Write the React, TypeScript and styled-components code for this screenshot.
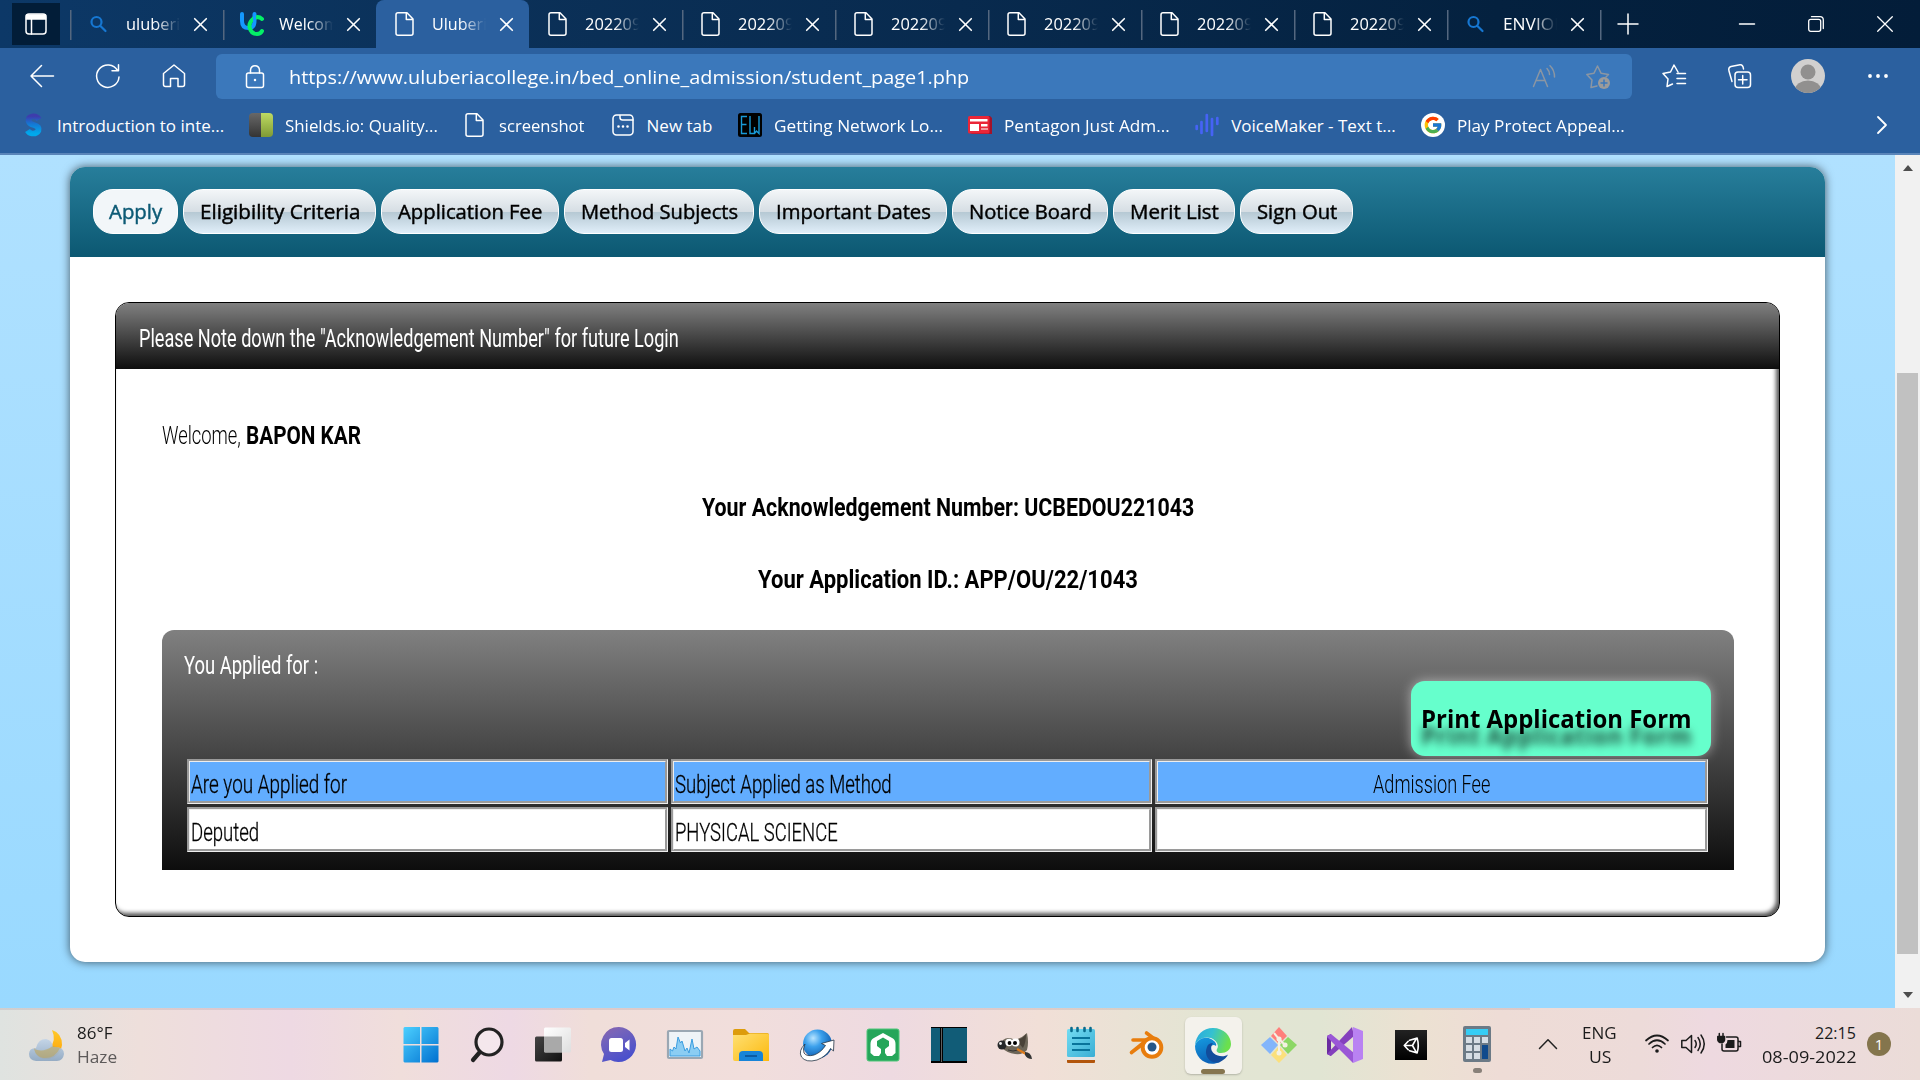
import React, { useLayoutEffect, useRef, useState } from 'react';
import styled, { createGlobalStyle } from 'styled-components';
import { FcGoogle } from 'react-icons/fc';

const UI = '"Open Sans", "Noto Sans", sans-serif';
const NARROW = 'Roboto, "Liberation Sans", sans-serif';

const GlobalStyle = createGlobalStyle`
  * { box-sizing: border-box; }
  html, body { margin: 0; padding: 0; }
  body { width: 1920px; height: 1080px; overflow: hidden; font-family: ${UI}; }
  svg { display: block; }
`;

/* ---------- text condensed or widened to a set measure ---------- */

const FitBox = styled.span<{ $w: number }>`
  display: inline-block;
  flex: none;
  width: ${p => p.$w}px;
  text-align: left;
  white-space: nowrap;
`;
const FitInner = styled.span`
  display: inline-block;
  transform-origin: 0 50%;
  white-space: nowrap;
`;

function Fit({ w, children }: { w: number; children: React.ReactNode }) {
  const ref = useRef<HTMLSpanElement>(null);
  const [scale, setScale] = useState(1);
  useLayoutEffect(() => {
    if (ref.current) setScale(w / ref.current.offsetWidth);
  }, [w]);
  return (
    <FitBox $w={w}>
      <FitInner ref={ref} style={{ transform: `scaleX(${scale})` }}>{children}</FitInner>
    </FitBox>
  );
}

/* ---------- icons ---------- */

const Line = styled.svg<{ $w?: number; $h?: number; $c?: string; $sw?: number }>`
  flex: none;
  width: ${p => p.$w ?? 24}px;
  height: ${p => p.$h ?? p.$w ?? 24}px;
  fill: none;
  stroke: ${p => p.$c ?? '#fff'};
  stroke-width: ${p => p.$sw ?? 1.5};
  stroke-linecap: round;
  stroke-linejoin: round;
  overflow: visible;
`;
const Art = styled.svg<{ $w?: number; $h?: number }>`
  flex: none;
  width: ${p => p.$w ?? 36}px;
  height: ${p => p.$h ?? p.$w ?? 36}px;
  overflow: visible;
`;

const DocIcon = () => (
  <Line viewBox="0 0 24 24"><path d="M5 .8H14L20 7V21.200Q20 23.200 18 23.200H5Q3 23.200 3 21.200V2.800Q3 .8 5 .8ZM13.300 1.200V7.500H19.700" /></Line>
);
const SearchIcon = () => (
  <Line viewBox="0 0 24 24" $c="#1677d2" $sw={2.2}><circle cx="9.500" cy="10" r="5" /><path d="M13.200 13.700L18.500 19" /></Line>
);
const UcIcon = () => (
  <Line viewBox="0 0 24 24" $sw={4}>
    <path d="M2 2V9Q2 16 8.500 16Q14.500 16 14.500 9V2" stroke="#1498ff" />
    <path d="M22 7Q18 3.500 13.500 6.500Q9 10 9.500 15Q11 22 17 22Q20.500 22 22 19" stroke="#04ef67" />
    <path d="M14.500 3V9" stroke="#1498ff" strokeWidth="3" />
  </Line>
);
const CloseIcon = () => (
  <Line viewBox="0 0 13 13" $w={13} $sw={1.6}><path d="M.7 .7L12.300 12.300M12.300 .7L.7 12.300" /></Line>
);
const NewTabIcon = () => (
  <Line viewBox="0 0 24 24">
    <rect x="2" y="2" width="20" height="20" rx="3.500" /><path d="M9 2.500V4.500Q9 7 11.500 7H22" />
    <path d="M7.500 13.500h.01M12 13.500h.01M16.500 13.500h.01" strokeWidth="2.600" />
  </Line>
);
const SIcon = () => (
  <Art $w={24} viewBox="0 0 24 24">
    <defs><linearGradient id="sg" x2="0" y2="1"><stop stopColor="#3d3dac" /><stop offset=".45" stopColor="#1478d4" /><stop offset="1" stopColor="#00a9ec" /></linearGradient></defs>
    <path d="M18 6.500Q16 3 12 3.300Q7 4 7.500 8Q8.500 11 13 12Q18.500 13.500 17.500 17.500Q15.500 21 11 20.500Q8 20 6.500 17.500" fill="none" stroke="url(#sg)" strokeWidth="5.600" />
  </Art>
);
const ShieldIcon = () => (
  <Art $w={24} viewBox="0 0 24 24">
    <defs>
      <linearGradient id="sh1" x2="0" y2="1"><stop stopColor="#686868" /><stop offset="1" stopColor="#343434" /></linearGradient>
      <linearGradient id="sh2" x2="0" y2="1"><stop stopColor="#bedb62" /><stop offset="1" stopColor="#7f9a35" /></linearGradient>
    </defs>
    <path d="M4 0H12V24H4Q0 24 0 20V4Q0 0 4 0Z" fill="url(#sh1)" /><path d="M12 0H20Q24 0 24 4V20Q24 24 20 24H12Z" fill="url(#sh2)" />
  </Art>
);
const EwIcon = () => (
  <Art $w={24} viewBox="0 0 24 24">
    <rect width="24" height="24" rx="2.500" fill="#000" />
    <path d="M9 3.500H3.500V20.500H9M3.500 11.500H8.500M12 3V20.500H16.500V14M16.500 20.500L18.500 18L21 20.500V3" fill="none" stroke="#189ad8" strokeWidth="1.400" />
  </Art>
);
const PentagonIcon = () => (
  <Art $w={24} viewBox="0 0 24 24">
    <path d="M2 3H22L24 5V21H4L1 19Z" fill="#a3122a" /><rect x="0" y="3" width="21.500" height="17.500" rx="1.500" fill="#ea2638" />
    <path d="M2 6H19.500V8.500H2ZM2 11H11V18H2ZM13 11H19.500V13.500H13ZM13 15H19.500V17H13Z" fill="#fff" />
    <path d="M13 15H19.500V17H13Z" fill="#f39aa2" />
  </Art>
);
const VoiceIcon = () => (
  <Line viewBox="0 0 24 24" $c="#4663f5" $sw={2.7}><path d="M1.700 13V16M6.500 9V20M11.800 2V18M17 6V22M22.300 5V11" /></Line>
);
const GoogleDisc = styled.span`
  width: 24px;
  height: 24px;
  border-radius: 50%;
  background: #fff;
  display: flex;
  align-items: center;
  justify-content: center;
`;

/* ---------- browser chrome ---------- */

const Screen = styled.div`
  width: 1920px;
  height: 1080px;
  display: flex;
  flex-direction: column;
  overflow: hidden;
`;
const TabStrip = styled.div`
  height: 48px;
  display: flex;
  background: linear-gradient(90deg, #0c3867 0%, #0b3159 24%, #082a4e 50%, #04213f 78%, #031d39 100%);
`;
const TabActions = styled.div`
  width: 48px;
  height: 42px;
  margin: 3px 10px 0 12px;
  background: #021d38;
  display: flex;
  align-items: center;
  justify-content: center;
`;
const Tab = styled.div<{ $active?: boolean; $noLine?: boolean }>`
  width: 153px;
  height: 48px;
  flex: none;
  display: flex;
  align-items: center;
  padding: 0 0 0 17px;
  border-radius: 8px 8px 0 0;
  background: ${p => (p.$active ? '#2b609f' : 'linear-gradient(#54677f, #54677f) 0 10px / 1.5px 30px no-repeat')};
  ${p => p.$noLine && 'background: none;'}
  color: #fff;
  font-size: 17px;
`;
const TabTitle = styled.div`
  width: 54px;
  margin-left: 15px;
  margin-right: 14px;
  overflow: hidden;
  white-space: nowrap;
  line-height: 30px;
  mask-image: linear-gradient(90deg, #000 55%, transparent 100%);
`;
const StripEnd = styled.div`
  flex: 1;
  display: flex;
  align-items: center;
  padding: 0 27px 0 17px;
  background: linear-gradient(#54677f, #54677f) 0 10px / 1.5px 30px no-repeat;
`;
const WindowButtons = styled.div`
  margin-left: auto;
  display: flex;
  align-items: center;
  gap: 53px;
`;
const Toolbar = styled.div`
  height: 57px;
  display: flex;
  align-items: center;
  padding: 0 30px 2px;
  background: #2b609f;
`;
const NavButtons = styled.div`
  width: 186px;
  display: flex;
  gap: 42px;
`;
const AddressBar = styled.div`
  width: 1416px;
  height: 45px;
  margin-top: 2px;
  display: flex;
  align-items: center;
  border-radius: 6px;
  background: #3b78bb;
  color: #fff;
  font-size: 19px;
  padding: 0 22px 0 27px;
`;
const Url = styled.div`
  margin-left: 22px;
  flex: 1;
  line-height: 30px;
`;
const AddressIcons = styled.div`
  display: flex;
  gap: 30px;
`;
const ToolIcons = styled.div`
  flex: 1;
  display: flex;
  align-items: center;
  justify-content: space-between;
  padding-left: 30px;
`;
const Bookmarks = styled.div`
  height: 50px;
  display: flex;
  align-items: center;
  gap: 25.200px;
  padding: 0 30px 8px 21px;
  background: #2b609f;
  border-bottom: 2px solid #5a85b9;
  color: #fff;
  font-size: 17px;
`;
const Bookmark = styled.div`
  display: flex;
  align-items: center;
  gap: 12px;
`;
const Pusher = styled.div`
  margin-left: auto;
`;

/* ---------- page ---------- */

const Viewport = styled.div`
  height: 853px;
  display: flex;
  background: linear-gradient(#b0e1ff, #99d9ff);
`;
const PageArea = styled.div`
  flex: 1;
  padding: 12px 70px 46px;
  display: flex;
`;
const Scrollbar = styled.div`
  width: 25px;
  background: #f1f1f1;
  display: flex;
  flex-direction: column;
  align-items: center;
  padding: 10px 0 10px;
`;
const Arrow = styled.div<{ $down?: boolean }>`
  border: 5.5px solid transparent;
  border-${p => (p.$down ? 'top' : 'bottom')}: 6px solid #4d4d4d;
  border-${p => (p.$down ? 'bottom' : 'top')}: 0;
`;
const Thumb = styled.div`
  width: 21px;
  height: 581px;
  margin: 202px 0 auto;
  background: #c1c1c1;
`;
const Card = styled.div`
  width: 1755px;
  height: 795px;
  border-radius: 15px;
  background: #fff;
  box-shadow: 0 0 10px rgba(0, 0, 0, .62);
`;
const Menu = styled.nav`
  height: 90px;
  display: flex;
  gap: 5px;
  padding: 22px 23px;
  border-radius: 15px 15px 0 0;
  background: linear-gradient(#277e9b, #0c5872);
`;
const Pill = styled.div<{ $w: number; $on?: boolean }>`
  width: ${p => p.$w}px;
  height: 45px;
  display: flex;
  align-items: center;
  justify-content: center;
  border: 1px solid #fff;
  border-radius: 20px;
  background: ${p => (p.$on ? '#f2f6f9' : 'linear-gradient(#f3f6f8 0%, #d6dee4 50%, #b5c8d3 51%, #e0eef9 100%)')};
  color: ${p => (p.$on ? '#0d5a75' : '#000')};
  font-size: 20px;
  line-height: 30px;
  -webkit-text-stroke: .45px currentColor;
`;
const Panel = styled.section`
  width: 1665px;
  height: 615px;
  margin: 45px 0 0 45px;
  border: 1px solid #000;
  border-radius: 14px;
  overflow: hidden;
  box-shadow: inset -3px -3px 4px #555;
  font-family: ${NARROW};
  font-size: 26.500px;
`;
const PanelHead = styled.div`
  height: 66px;
  padding: 2px 23px 0;
  display: flex;
  align-items: center;
  background: linear-gradient(#808080, #0d0d0d);
  color: #fff;
`;
const PanelBody = styled.div`
  padding: 50px 45px 0 46px;
`;
const Welcome = styled.div`
  height: 31px;
  line-height: 31px;
  display: flex;
  gap: 5px;
  font-weight: 300;
  b { font-weight: 700; }
`;
const Notice = styled.div`
  height: 31px;
  line-height: 31px;
  margin-top: 41px;
  text-align: center;
  font-weight: 700;
`;
const Applied = styled.div`
  width: 1572px;
  height: 240px;
  margin-top: 36px;
  border-radius: 12px 12px 0 0;
  background: linear-gradient(#808080, #0d0d0d);
  padding: 18px 23px 18px 22px;
  display: flex;
  flex-direction: column;
`;
const AppliedTitle = styled.div`
  height: 33px;
  line-height: 34px;
  color: #fff;
`;
const PrintButton = styled.div`
  align-self: flex-end;
  width: 300px;
  height: 75px;
  flex: none;
  padding-left: 10px;
  border-radius: 14px;
  background: #66ffcc;
  box-shadow: 0 0 12px rgba(255, 255, 255, .5);
  color: #000;
  font-family: ${UI};
  font-size: 25px;
  font-weight: 700;
  line-height: 75px;
  text-shadow: 0 17px 9px rgba(0, 0, 0, .7);
`;
const Grid = styled.div`
  display: grid;
  grid-template-columns: 481px 481px 553px;
  grid-auto-rows: 45px;
  gap: 3px;
  margin: 3px 0 0 3px;
`;
const Cell = styled.div<{ $head?: boolean; $center?: boolean }>`
  border: 3px groove #eee;
  padding: 6px 2px 0 1px;
  line-height: 32px;
  text-align: ${p => (p.$center ? 'center' : 'left')};
  background: ${p => (p.$head ? '#62adff' : '#fff')};
  font-weight: 300;
  -webkit-text-stroke: ${p => (p.$center ? 0 : .3)}px #000;
  color: #000;
`;

/* ---------- taskbar ---------- */

const Taskbar = styled.div`
  height: 72px;
  display: flex;
  align-items: center;
  color: #1b1b1b;
  font-size: 16px;
  background:
    linear-gradient(rgba(120, 90, 110, .15), rgba(120, 90, 110, .15)) 0 0 / 1530px 2px no-repeat,
    linear-gradient(90deg, #dfe3e0 0, #eedfdb 140px, #eed9e3 290px, #f0dedb 400px, #eed9e4 510px, #f0ded9 590px, #f1dedc 750px, #eedae1 890px, #f1dfd7 1040px, #e3e5d3 1210px, #e1e5d3 1320px, #ece1d2 1420px, #eedcd6 1500px, #eddbd9 1640px, #eed9e0 1710px, #ebdcd8 1920px);
`;
const Weather = styled.div`
  width: 388px;
  padding: 0 0 0 29px;
  display: flex;
  align-items: center;
  gap: 12px;
`;
const Lines = styled.div<{ $align?: string }>`
  display: flex;
  flex-direction: column;
  align-items: ${p => p.$align ?? 'flex-start'};
  padding-top: 2px;
  line-height: 24px;
`;
const Muted = styled.span`
  color: #5d5a5a;
`;
const Apps = styled.div`
  display: flex;
  height: 72px;
`;
const AppSlot = styled.div`
  width: 66px;
  height: 72px;
  display: flex;
  align-items: center;
  justify-content: center;
  padding-top: 2px;
`;
const ActiveApp = styled.div`
  width: 57px;
  height: 57px;
  border-radius: 6px;
  display: flex;
  flex-direction: column;
  align-items: center;
  padding-top: 11px;
  gap: 5px;
  background: #f4f2ec;
  box-shadow: 0 1px 2px rgba(0, 0, 0, .22);
`;
const Marker = styled.i<{ $w: number; $c: string }>`
  width: ${p => p.$w}px;
  height: 5px;
  border-radius: 3px;
  background: ${p => p.$c};
`;
const Running = styled.div`
  display: flex;
  flex-direction: column;
  align-items: center;
  gap: 6px;
  padding-top: 9px;
`;
const Tray = styled.div`
  flex: 1;
  display: flex;
  align-items: center;
  padding: 0 29px;
`;
const Language = styled(Lines)`
  margin-left: 25px;
`;
const TrayIcons = styled.div`
  display: flex;
  gap: 12px;
  margin-left: 28px;
`;
const Clock = styled(Lines)`
  margin-left: auto;
`;
const Badge = styled.div`
  width: 24px;
  height: 24px;
  margin-left: 11px;
  border-radius: 50%;
  background: #84754d;
  color: #fff;
  font-size: 15px;
  line-height: 24px;
  text-align: center;
`;

const StartIcon = () => (
  <Art viewBox="0 0 36 36">
    <defs><linearGradient id="win" x2="1" y2="1"><stop stopColor="#4cd0ff" /><stop offset="1" stopColor="#0070d0" /></linearGradient></defs>
    <path d="M1.500 0H17V17H.5V1ZM18.500 0H34.500L35.500 1V17H18.500ZM.5 18.500H17V35.500H1.500L.5 34.500ZM18.500 18.500H35.500V34.500L34.500 35.500H18.500Z" fill="url(#win)" />
  </Art>
);
const FindIcon = () => (
  <Art viewBox="0 0 36 36"><circle cx="20" cy="15" r="13" fill="#fff" fillOpacity=".35" stroke="#222" strokeWidth="3.200" /><path d="M10.500 25.500L4 33" stroke="#222" strokeWidth="4.200" strokeLinecap="round" /></Art>
);
const TaskViewIcon = () => (
  <Art viewBox="0 0 36 36">
    <defs>
      <linearGradient id="tv" x2="1" y2="1"><stop stopColor="#444" /><stop offset="1" stopColor="#111" /></linearGradient>
      <linearGradient id="tv2" x2="1" y2="1"><stop stopColor="#fff" /><stop offset="1" stopColor="#dedede" /></linearGradient>
    </defs>
    <rect x="0" y="9.500" width="27" height="25" rx="1.500" fill="url(#tv)" /><rect x="9" y=".5" width="27" height="25" rx="1.500" fill="url(#tv2)" /><rect x="9" y="9.500" width="18" height="15.500" fill="#a9a9a9" />
  </Art>
);
const ChatIcon = () => (
  <Art viewBox="0 0 36 36">
    <defs><linearGradient id="ch" x1="0" y1="0" x2=".5" y2="1"><stop stopColor="#8c62ac" /><stop offset=".3" stopColor="#7664ba" /><stop offset="1" stopColor="#4a50cc" /></linearGradient></defs>
    <path d="M18 0A17.500 17.500 0 1 1 9.500 33L1 35L3 27A17.500 17.500 0 0 1 18 0Z" fill="url(#ch)" />
    <rect x="8" y="11" width="14" height="14" rx="2.500" fill="#fff" /><path d="M24 16L28.500 12.500V23.500L24 20Z" fill="#fff" />
  </Art>
);
const PerfIcon = () => (
  <Art viewBox="0 0 36 36">
    <rect x="1" y="4" width="34" height="27" rx="1" fill="#eef3f7" stroke="#9aa7b3" strokeWidth="2.200" />
    <path d="M3 22L5.500 24L7 20L9 22L11 10L13.500 16L15 14L18 24L20 21L22 26L25 12L27 22L30 20L33 24V29H3Z" fill="#8bcdf3" stroke="#3a9de0" strokeWidth="1" />
  </Art>
);
const FolderIcon = () => (
  <Art viewBox="0 0 36 36">
    <defs><linearGradient id="fo" x2="1" y2="1"><stop stopColor="#ffe073" /><stop offset="1" stopColor="#fcb90e" /></linearGradient></defs>
    <path d="M0 4Q0 2 2 2H12L16 6H34Q36 6 36 8V15H0Z" fill="#dd9c0b" /><path d="M0 8H13L17 6.500H34Q36 6.500 36 8V34H2Q0 34 0 32Z" fill="url(#fo)" />
    <path d="M6 34V28Q6 24 10 24H26Q30 24 30 28V34Z" fill="#1784d8" /><path d="M12 29H24" stroke="#0b579e" strokeWidth="1.800" />
  </Art>
);
const GlobeIcon = () => (
  <Art viewBox="0 0 36 36">
    <defs><radialGradient id="gl" cx=".35" cy=".3" r=".75"><stop stopColor="#b8e4ff" /><stop offset=".4" stopColor="#3ba0ec" /><stop offset="1" stopColor="#0a55a8" /></radialGradient></defs>
    <circle cx="18.500" cy="17" r="14.500" fill="url(#gl)" />
    <path d="M6 17Q-1 24 2.500 30Q7 36 18 33Q28 29 31.500 21.500L34.500 24L35 13L22.500 16.500L26.500 18.500Q22 25.500 15 28Q7.500 30 5 26Q3.500 22.500 6 17Z" fill="#fff" stroke="#234" strokeWidth=".8" />
  </Art>
);
const GreenIcon = () => (
  <Art viewBox="0 0 36 36">
    <rect x="2" y="2" width="32" height="32" rx="2" fill="#25a65a" stroke="#51c77b" />
    <path d="M18 6L28 11.500Q30.500 13 30.500 17V26L27 29H22L20 26V22L24 19V14L18 10.500L12 14V19L16 22V26L14 29H9L5.500 26V17Q5.500 13 8 11.500Z" fill="#fff" />
  </Art>
);
const PanesIcon = () => (
  <Art viewBox="0 0 36 36"><rect width="36" height="36" fill="#000" /><path d="M0 1H9V34H0ZM12 1H36V34H12Z" fill="#115c77" /><path d="M10.500 1V35" stroke="#777" strokeWidth=".8" /></Art>
);
const GimpIcon = () => (
  <Art viewBox="0 0 36 36">
    <path d="M6 13Q11 9 18 13Q25 11 30 6Q32 16 30 23Q26 28 18 27Q10 26 5 21Z" fill="#6d6659" />
    <path d="M19 13Q26 12 29 7Q29 16 26 21Z" fill="#494238" />
    <circle cx="5" cy="18" r="4.500" fill="#26282a" /><circle cx="3.500" cy="16.500" r="1.400" fill="#eee" />
    <circle cx="12" cy="15.500" r="3.700" fill="#fff" /><circle cx="18.500" cy="15.500" r="4" fill="#fff" /><circle cx="12.500" cy="16" r="1.900" /><circle cx="18" cy="16" r="2" />
    <path d="M11 23Q16 25 21 23" stroke="#333" fill="none" /><path d="M20 22L29 27" stroke="#dc7a1c" strokeWidth="2.200" /><path d="M28 25Q34 25 35 32Q30 32 28 28Z" fill="#333" />
  </Art>
);
const NotepadIcon = () => (
  <Art viewBox="0 0 36 36">
    <defs><linearGradient id="np" x2="1" y2="1"><stop stopColor="#73dcf2" /><stop offset="1" stopColor="#3aaed4" /></linearGradient></defs>
    <rect x="4" y="30" width="28" height="6" rx="1" fill="#b2550b" /><rect x="4" y="28" width="28" height="5" fill="#e4e4e4" /><rect x="4" y="2" width="28" height="28" rx="1.500" fill="url(#np)" />
    <path d="M9 11H27M9 17H27M9 23H27" stroke="#08749b" strokeWidth="1.800" /><path d="M8.500 1V4M14.500 1V4M21.500 1V4M27.500 1V4" stroke="#096b8d" strokeWidth="2.600" strokeLinecap="round" />
  </Art>
);
const BlenderIcon = () => (
  <Art viewBox="0 0 36 36" fill="none" stroke="#e87d0d" strokeLinecap="round" strokeLinejoin="round">
    <path d="M4 13H18L2.500 25.500M17.500 6L30 15.500M11 19L2.500 25.500" strokeWidth="3.600" /><circle cx="23" cy="20.500" r="9.300" strokeWidth="4" fill="#fff" /><circle cx="23" cy="20" r="4.500" fill="#265787" stroke="none" />
  </Art>
);
const EdgeIcon = () => (
  <Art viewBox="0 0 36 36">
    <defs>
      <linearGradient id="eg1" x2="1" y2=".25"><stop stopColor="#2aa9e0" /><stop offset=".5" stopColor="#35c1d0" /><stop offset="1" stopColor="#6be04d" /></linearGradient>
      <linearGradient id="eg2" x2=".3" y2="1"><stop stopColor="#169be0" /><stop offset="1" stopColor="#0b63b8" /></linearGradient>
    </defs>
    <path d="M0 17C1 7 8 0 18 0C29 0 36 8 36 16C36 22 31 25 26 25C22 25 21 23 22 21C24 19 23 13 16 10C9 8 3 11 0 17Z" fill="url(#eg1)" />
    <path d="M0 18C2 11 10 8 16 11C20 13 22 16 21 18C18 15 14 19 14 23C14 29 19 34 25 34C12 40 0 30 0 18Z" fill="url(#eg2)" />
    <path d="M12 19C8 28 16 37 25 34C29 32 32 29 33 26.500C30 29 23 29 19 25.500C16 23 15 19 18 15C15 15 13 16 12 19Z" fill="#124d9c" />
  </Art>
);
const GitIcon = () => (
  <Art viewBox="0 0 36 36">
    <path d="M18 0L26 9L18 17L10 9Z" fill="#ff7f7b" /><path d="M9 10L17 18L9 27L0 18Z" fill="#83b5fb" /><path d="M27 10L36 18L27 27L19 18Z" fill="#8cd765" /><path d="M18 19L26 28L18 36L10 28Z" fill="#fbe07c" />
    <path d="M13 6L18 12V27M18 12L24 18" stroke="#f4f1e3" strokeWidth="2" fill="none" /><path d="M18 12h.1M18 26h.1M24 18h.1" stroke="#f4f1e3" strokeWidth="5" strokeLinecap="round" />
  </Art>
);
const VsIcon = () => (
  <Art viewBox="0 0 36 36">
    <path d="M0 9L4 7V29L0 27Z" fill="#6a2ba0" /><path d="M0 27L25 0L27 9L4 29Z" fill="#8440bd" /><path d="M0 9L4 7L27 26L26 36L0 10Z" fill="#9a57d6" /><path d="M26 0L36 4V32L26 36Z" fill="#b982f2" />
  </Art>
);
const UnityTile = styled.div`
  width: 32px;
  height: 30px;
  display: flex;
  align-items: center;
  justify-content: center;
  background: linear-gradient(#222, #000);
`;
const UnityIcon = () => (
  <Line viewBox="0 0 18 18" $w={17} $sw={1.700}>
    <path d="M7 3.500L15 1.200Q17.300 9 15 16.800L7 14.500M5.500 4.500L1.300 9L5.500 13.500M1.300 9H10M10 9L14 2M10 9L14 16" />
  </Line>
);
const CalcIcon = () => (
  <Art viewBox="0 0 36 36">
    <rect x="4" y="0" width="28" height="36" rx="2" fill="#6c7a86" /><rect x="7" y="3" width="22" height="6" fill="#36cdf5" />
    <path d="M7 11h6v6h-6zM15 11h6v6h-6zM23 11h6v6h-6zM7 19h6v6h-6zM15 19h6v6h-6zM7 27h6v6h-6zM15 27h6v6h-6z" fill="#d6dde4" /><rect x="23" y="19" width="6" height="14" fill="#104a8c" />
  </Art>
);
const WeatherIcon = () => (
  <Art viewBox="0 0 36 36">
    <defs><linearGradient id="mo" x2="0" y2="1"><stop stopColor="#ffc928" /><stop offset="1" stopColor="#ff9e06" /></linearGradient><linearGradient id="cl" x2="0" y2="1"><stop stopColor="#c2d4e8" /><stop offset="1" stopColor="#8fa8c2" /></linearGradient></defs>
    <g transform="translate(0 2)">
      <path d="M23 2Q28 13 20 21Q13 26 5 20Q7 32 20 31Q32 28 33 17Q33 5 23 2Z" fill="url(#mo)" />
      <path d="M7 33Q0 32 0 26Q0 20 7 20Q9 11 17 11Q23 12 24 19Q35 18 35 26Q34 33 28 33Z" fill="url(#cl)" fillOpacity=".93" />
      <path d="M5 21Q14 25 24 18L31 20Q26 31 14 30Q7 29 5 21Z" fill="#c0a557" fillOpacity=".55" />
    </g>
  </Art>
);

const tabs: { icon: React.ReactNode; title: string; w: number; active?: boolean; noLine?: boolean }[] = [
  { icon: <SearchIcon />, title: 'uluberi', w: 54 },
  { icon: <UcIcon />, title: 'Welcom', w: 60 },
  { icon: <DocIcon />, title: 'Uluberi', w: 55, active: true },
  { icon: <DocIcon />, title: '202209', w: 56, noLine: true },
  { icon: <DocIcon />, title: '202209', w: 56 },
  { icon: <DocIcon />, title: '202209', w: 56 },
  { icon: <DocIcon />, title: '202209', w: 56 },
  { icon: <DocIcon />, title: '202209', w: 56 },
  { icon: <DocIcon />, title: '202209', w: 56 },
  { icon: <SearchIcon />, title: 'ENVIOR', w: 62 },
];

const bookmarks: [React.ReactNode, string, number][] = [
  [<SIcon />, 'Introduction to inte...', 167],
  [<ShieldIcon />, 'Shields.io: Quality...', 153],
  [<DocIcon />, 'screenshot', 86],
  [<NewTabIcon />, 'New tab', 66],
  [<EwIcon />, 'Getting Network Lo...', 169],
  [<PentagonIcon />, 'Pentagon Just Adm...', 166],
  [<VoiceIcon />, 'VoiceMaker - Text t...', 165],
  [<GoogleDisc><FcGoogle size={20} /></GoogleDisc>, 'Play Protect Appeal...', 168],
];

const menu: [string, number, number][] = [
  ['Apply', 85, 53],
  ['Eligibility Criteria', 193, 160],
  ['Application Fee', 178, 144],
  ['Method Subjects', 190, 157],
  ['Important Dates', 188, 155],
  ['Notice Board', 156, 123],
  ['Merit List', 122, 89],
  ['Sign Out', 113, 80],
];

const apps: React.ReactNode[] = [
  <StartIcon />, <FindIcon />, <TaskViewIcon />, <ChatIcon />, <PerfIcon />, <FolderIcon />, <GlobeIcon />, <GreenIcon />,
  <PanesIcon />, <GimpIcon />, <NotepadIcon />, <BlenderIcon />,
  <ActiveApp><EdgeIcon /><Marker $w={24} $c="#85754f" /></ActiveApp>,
  <GitIcon />, <VsIcon />, <UnityTile><UnityIcon /></UnityTile>,
  <Running><CalcIcon /><Marker $w={9} $c="#888079" /></Running>,
];

export default function App() {
  return (
    <Screen>
      <GlobalStyle />
      <TabStrip>
        <TabActions>
          <Line viewBox="0 0 22 22" $w={22}><rect x="1" y="1" width="20" height="20" rx="3" /><path d="M1.500 2H20.500V6H1.500Z" fill="#fff" /><path d="M6.500 6V21" /></Line>
        </TabActions>
        {tabs.map((t, i) => (
          <Tab key={i} $active={t.active} $noLine={t.noLine}>
            {t.icon}
            <TabTitle><Fit w={t.w}>{t.title}</Fit></TabTitle>
            <CloseIcon />
          </Tab>
        ))}
        <StripEnd>
          <Line viewBox="0 0 22 22" $w={22}><path d="M11 1V21M1 11H21" /></Line>
          <WindowButtons>
            <Line viewBox="0 0 16 16" $w={16}><path d="M.5 8H15.500" /></Line>
            <Line viewBox="0 0 16 16" $w={16} $sw={1.300}><rect x=".7" y="3.300" width="12" height="12" rx="2" /><path d="M3.500 .7H12Q15.300 .7 15.300 4V12.500" /></Line>
            <Line viewBox="0 0 16 16" $w={16} $sw={1.300}><path d="M.7 .7L15.300 15.300M15.300 .7L.7 15.300" /></Line>
          </WindowButtons>
        </StripEnd>
      </TabStrip>

      <Toolbar>
        <NavButtons>
          <Line viewBox="0 0 24 24"><path d="M23.500 12H1M11.500 1.500L1 12L11.500 22.500" /></Line>
          <Line viewBox="0 0 24 24"><path d="M23 13A11.200 11.200 0 1 1 21.500 6.500M22.500 .8V6.800H16" /></Line>
          <Line viewBox="0 0 24 24"><path d="M1.500 9.500L12 1L22.500 9.500V20.500Q22.500 22.500 20.500 22.500H16V14.500H8.500V22.500H3.500Q1.500 22.500 1.500 20.500Z" /></Line>
        </NavButtons>
        <AddressBar>
          <Line viewBox="0 0 24 24"><rect x="3.500" y="8" width="17" height="14.500" rx="2" /><path d="M7.500 8V5Q8 .8 12 .8T16.500 5V8" /><path d="M12 15h.01" strokeWidth="2.500" /></Line>
          <Url><Fit w={680}>https://www.uluberiacollege.in/bed_online_admission/student_page1.php</Fit></Url>
          <AddressIcons>
            <Line viewBox="0 0 24 24" $c="#8b96a3"><path d="M1.500 21.500L8.500 4.500L15.500 21.500M4 15.500H13M15 3.500Q17.500 6 17.500 9.500M18 .8Q22.500 5 22.500 12" /></Line>
            <Line viewBox="0 0 24 24" $c="#8b96a3"><path d="M11 21L5 22.500L6 15L.8 9.500L8 8.200L11.500 1L15 8.200L22.500 9.500L20 12" /><circle cx="18" cy="18" r="6" fill="#9b9b9b" stroke="none" /><path d="M18 15V21M15 18H21" stroke="#3b78bb" /></Line>
          </AddressIcons>
        </AddressBar>
        <ToolIcons>
          <Line viewBox="0 0 24 24"><path d="M16 8L12 1L8.500 8L1 9.500L6 15L5 22.500L10.500 20M15 9.500H23.500M15 14.500H23.500M15 19.500H23.500" /></Line>
          <Line viewBox="0 0 24 24"><rect x="8" y="8" width="15.500" height="15.500" rx="3" /><path d="M15.700 11.500V20M11.500 15.700H20M5 17.500L2 7Q1 3.500 4 2.500L13 .8Q16 .5 16.500 5" /></Line>
          <Art $w={34} viewBox="0 0 34 34"><clipPath id="av"><circle cx="17" cy="17" r="17" /></clipPath><g clipPath="url(#av)"><rect width="34" height="34" fill="#d1d0cf" /><circle cx="17" cy="13" r="7.500" fill="#91908f" /><ellipse cx="17" cy="31" rx="13" ry="9.500" fill="#91908f" /></g></Art>
          <Line viewBox="0 0 24 24" $sw={3.8}><path d="M4 12h.01M12 12h.01M20 12h.01" /></Line>
        </ToolIcons>
      </Toolbar>

      <Bookmarks>
        {bookmarks.map(([icon, text, w]) => (
          <Bookmark key={text}>{icon}<Fit w={w}>{text}</Fit></Bookmark>
        ))}
        <Pusher><Line viewBox="0 0 16 18" $w={16} $h={18} $sw={1.800}><path d="M4 1L12 9L4 17" /></Line></Pusher>
      </Bookmarks>

      <Viewport>
        <PageArea>
          <Card>
            <Menu>
              {menu.map(([label, w, tw], i) => (
                <Pill key={label} $w={w} $on={i === 0}><Fit w={tw}>{label}</Fit></Pill>
              ))}
            </Menu>
            <Panel>
              <PanelHead><Fit w={540}>Please Note down the "Acknowledgement Number" for future Login</Fit></PanelHead>
              <PanelBody>
                <Welcome><Fit w={79}>Welcome,</Fit><b><Fit w={115}>BAPON KAR</Fit></b></Welcome>
                <Notice><Fit w={492}>Your Acknowledgement Number: UCBEDOU221043</Fit></Notice>
                <Notice><Fit w={380}>Your Application ID.: APP/OU/22/1043</Fit></Notice>
                <Applied>
                  <AppliedTitle><Fit w={134}>You Applied for :</Fit></AppliedTitle>
                  <PrintButton><Fit w={271}>Print Application Form</Fit></PrintButton>
                  <Grid>
                    <Cell $head><Fit w={156}>Are you Applied for</Fit></Cell>
                    <Cell $head><Fit w={217}>Subject Applied as Method</Fit></Cell>
                    <Cell $head $center><Fit w={117}>Admission Fee</Fit></Cell>
                    <Cell><Fit w={68}>Deputed</Fit></Cell>
                    <Cell><Fit w={163}>PHYSICAL SCIENCE</Fit></Cell>
                    <Cell />
                  </Grid>
                </Applied>
              </PanelBody>
            </Panel>
          </Card>
        </PageArea>
        <Scrollbar><Arrow /><Thumb /><Arrow $down /></Scrollbar>
      </Viewport>

      <Taskbar>
        <Weather>
          <WeatherIcon />
          <Lines><Fit w={35}>86°F</Fit><Muted><Fit w={40}>Haze</Fit></Muted></Lines>
        </Weather>
        <Apps>{apps.map((a, i) => <AppSlot key={i}>{a}</AppSlot>)}</Apps>
        <Tray>
          <Line viewBox="0 0 18 10" $w={18} $h={10} $c="#222"><path d="M.5 9.500L9 .8L17.500 9.500" /></Line>
          <Language $align="center"><Fit w={35}>ENG</Fit><Fit w={22}>US</Fit></Language>
          <TrayIcons>
            <Line viewBox="0 0 24 24" $c="#1b1b1b" $sw={1.700}><path d="M1 8.500Q12 -1.500 23 8.500M4 12Q12 4.500 20 12M7.500 15.500Q12 11 16.500 15.500" /><path d="M12 19h.01" strokeWidth="3.600" /></Line>
            <Line viewBox="0 0 24 24" $c="#1b1b1b"><path d="M.8 8.500H5L10.500 3.500V20.500L5 15.500H.8ZM14 8.500Q16.500 12 14 15.500M17 5.500Q21.500 12 17 18.500M20 3Q26.500 12 20 21" /></Line>
            <Line viewBox="0 0 24 24" $c="#1b1b1b" $sw={1.500}>
              <path d="M9.500 5H19Q21 5 21 7V17Q21 19 19 19H7Q5 19 5 17V12M21.800 9.500H23.500V14.500H21.800" />
              <path d="M10.500 8H17.500V16H8.500V12.500Q10.500 11 10.500 8Z" fill="#1b1b1b" stroke="none" />
              <path d="M.8 4.500H7.500V8Q7 10.500 4.200 10.500T.8 8ZM2.300 1.500V4.500M6 1.500V4.500" fill="#1b1b1b" />
            </Line>
          </TrayIcons>
          <Clock $align="flex-end"><Fit w={41}>22:15</Fit><Fit w={94}>08-09-2022</Fit></Clock>
          <Badge>1</Badge>
        </Tray>
      </Taskbar>
    </Screen>
  );
}
